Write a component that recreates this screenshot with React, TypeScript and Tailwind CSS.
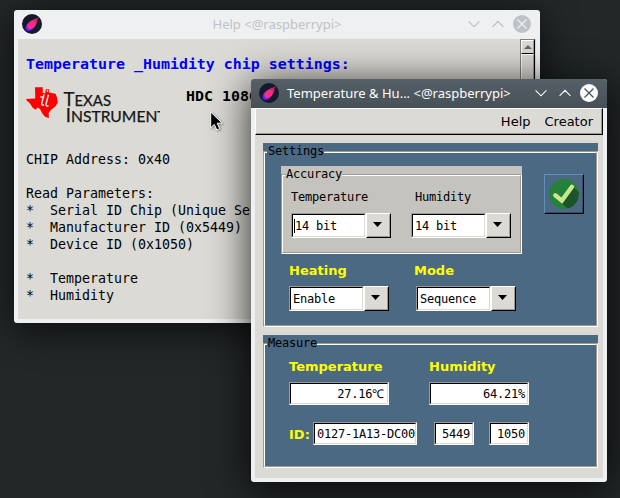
import React from "react";

const mono = "font-['DejaVu_Sans_Mono','Liberation_Mono',monospace]";
const sans = "font-['DejaVu_Sans','Liberation_Sans',sans-serif]";
const noto = "font-['Noto_Sans','Open_Sans',sans-serif]";

function CometIcon({ id }: { id: string }) {
  return (
    <svg width="20" height="20" viewBox="0 0 20 20" className="shrink-0">
      <defs>
        <linearGradient id={id} x1="0.1" y1="0.9" x2="0.8" y2="0.2">
          <stop offset="0" stopColor="#4a20ff" />
          <stop offset="0.35" stopColor="#9a22f0" />
          <stop offset="0.7" stopColor="#f0289c" />
          <stop offset="1" stopColor="#d0205c" />
        </linearGradient>
      </defs>
      <circle cx="10" cy="10" r="10" fill="#151a2a" />
      <path d="M16.8 3.2 15 6.8 15.7 6.7 14.2 10.2C12.7 13.8 9.8 16.6 6.7 16.9 3.6 17 2.8 14.3 4 11.9 5.1 9.5 7.7 7.2 10 6.3L11 6 12.5 4.6 12.8 5.3Z" fill={`url(#${id})`} />
      <ellipse cx="9.3" cy="11.2" rx="4.4" ry="2.8" transform="rotate(-42 9.3 11.2)" fill="#ff2d78" />
    </svg>
  );
}

function TitleButtons({ active }: { active?: boolean }) {
  const line = active ? "#fcfcfc" : "#b9bec2";
  return (
    <svg width="64" height="18" viewBox="0 0 64 18" className="shrink-0">
      <path d="M0.6 6.4 6 11.8 11.4 6.4M24.6 11.8 30 6.4 35.4 11.8" fill="none" stroke={line} strokeWidth="1.1" />
      <circle cx="54" cy="9" r="9" fill={active ? "#fcfcfc" : "#bdc3c7"} />
      <path d="M49.5 4.5 58.5 13.5M58.5 4.5 49.5 13.5" fill="none" stroke={active ? "#475057" : "#eff0f1"} strokeWidth="1.2" />
    </svg>
  );
}

function TexasLogo() {
  return (
    <svg width="134" height="38" viewBox="0 0 134 38" className="block overflow-hidden">
      <path d="M9 1.3H16.7V6.8L19.2 7.4 19.8 3.2H23.4L22.8 6.6 29.6 7.7 31 11.5 31.8 16.5 29.6 20.2 25 24 22.6 27 23 32 19.3 31 16.3 27.6 14 23 11.6 21.6 9.6 23.7 6.7 21.8 4.2 17.7 0.3 14 0.3 13 9.3 12.6Z" fill="#ff0000" />
      <path d="M18 8.2 15.8 17.3Q15.4 19.6 18 18.8M22.4 8.8 20 18.2Q19.6 20.8 22.6 19.8" fill="none" stroke="#ebe2de" strokeWidth="1.5" />
      <path d="M14.3 11H18.2M21.8 3.8 21.3 5.8" fill="none" stroke="#ebe2de" strokeWidth="1.4" />
      <g fill="#161616" stroke="#161616" strokeWidth="0.25" fontFamily="'Lato','Open Sans',sans-serif">
        <text x="37.5" y="20" fontSize="18.5" textLength="11" lengthAdjust="spacingAndGlyphs">T</text>
        <text x="48.5" y="20" fontSize="14.5" textLength="36.5" lengthAdjust="spacingAndGlyphs">EXAS</text>
        <text x="39.7" y="35.5" fontSize="18.5">I</text>
        <text x="45" y="35.5" fontSize="14.5" textLength="104" lengthAdjust="spacingAndGlyphs">NSTRUMENTS</text>
      </g>
    </svg>
  );
}

/** Sunken two-pixel edge around an editable value. */
function Field({ children, className }: { children: React.ReactNode; className: string }) {
  return (
    <div className={`border border-t-[#9e9a91] border-l-[#9e9a91] border-r-white border-b-white ${className}`}>
      <div className={`flex h-full items-center overflow-hidden whitespace-pre border border-t-black border-l-black border-r-[#dcdad5] border-b-[#dcdad5] bg-white text-[12px] leading-[14px] tracking-[-0.224px] text-black ${mono}`}>
        {children}
      </div>
    </div>
  );
}

function Combo({ value, caret }: { value: string; caret?: boolean }) {
  return (
    <div className="flex h-[25px] w-[100px]">
      <Field className="h-[25px] w-[75px]">
        <span className={caret ? "ml-[1px] border-l border-black" : "ml-[2px]"}>{value}</span>
      </Field>
      <div className="h-[25px] w-[25px] border border-t-white border-l-white border-r-black border-b-black">
        <div className="flex h-full items-start justify-start border border-t-[#dcdad5] border-l-[#dcdad5] border-r-[#9e9a91] border-b-[#9e9a91] bg-[#dcdad5] pl-[5px] pt-[7px]">
          <svg width="9" height="5" viewBox="0 0 9 5"><path d="M0 0H9L4.5 5Z" fill="#000" /></svg>
        </div>
      </div>
    </div>
  );
}

/** Grooved group box whose caption interrupts the top edge. */
function Group({ title, bg, className, captionWidth, children }: { title: string; bg: string; className: string; captionWidth: string; children: React.ReactNode }) {
  return (
    <section className={`flex flex-col pt-[8px] ${bg} ${className}`}>
      <div className="flex-1 border border-t-[#9e9a91] border-l-[#9e9a91] border-r-white border-b-white">
        <div className="h-full border border-t-white border-l-white border-r-[#9e9a91] border-b-[#9e9a91]">
          <h2 className={`-mt-[8px] ml-[2px] flex h-[12px] items-center whitespace-nowrap pl-[1px] text-[12px] tracking-[-0.224px] text-black ${mono} ${bg} ${captionWidth}`}>{title}</h2>
          {children}
        </div>
      </div>
    </section>
  );
}

function Caption({ children, className = "" }: { children: React.ReactNode; className?: string }) {
  return <div className={`h-[16px] text-[13px] font-bold leading-[18px] text-[#ffff00] ${sans} ${className}`}>{children}</div>;
}

function HelpWindow() {
  return (
    <div className="absolute left-[14px] top-[10px] flex h-[313px] w-[526px] flex-col rounded-[3px] bg-[#eff0f1] shadow-[0_6px_36px_rgba(0,0,0,0.7)]">
      <header className="flex h-[29px] items-center pb-[1px] pl-[8px] pr-[8px]">
        <CometIcon id="comet-help" />
        <h1 className={`flex-1 pl-[44px] text-center text-[13px] leading-[18px] text-[#bdc3c7] ${noto}`}>Help &lt;@raspberrypi&gt;</h1>
        <TitleButtons />
      </header>
      <main className="mx-[4px] mb-[4px] flex flex-1 bg-[#dbdad5]">
        <div className={`flex-1 whitespace-pre pl-[8px] text-[13.29px] leading-[17px] text-black ${mono}`}>
          <h2 className="pt-[16px] text-[14.95px] font-bold leading-[18px] text-[#0000ff]">Temperature _Humidity chip settings:</h2>
          <div className="mt-[13px] flex">
            <TexasLogo />
            <strong className="ml-[26px] text-[14.95px] leading-[20px]">HDC 1080</strong>
          </div>
          <p className="mt-[27px]">CHIP Address: 0x40</p>
          <p className="mt-[17px]">Read Parameters:</p>
          <p>*  Serial ID Chip (Unique Serial)</p>
          <p>*  Manufacturer ID (0x5449)</p>
          <p>*  Device ID (0x1050)</p>
          <p className="mt-[17px]">*  Temperature</p>
          <p>*  Humidity</p>
        </div>
        <div className="mr-[1px] flex w-[15px] flex-col border border-t-[#807e78] border-l-[#807e78] border-r-black border-b-black bg-[#dbdad5]">
          <div className="flex h-[14px] items-center justify-center border border-t-white border-l-white border-r-[#9e9a91] border-b-black">
            <svg width="8" height="4" viewBox="0 0 8 4"><path d="M4 0 8 4H0Z" fill="#666" /></svg>
          </div>
          <div className="flex-1 border border-t-white border-l-white border-r-[#9e9a91] border-b-black" />
        </div>
      </main>
    </div>
  );
}

function ChipWindow() {
  return (
    <div className="absolute left-[251px] top-[79px] flex h-[403px] w-[356px] flex-col rounded-[3px] bg-[#eff0f1] shadow-[0_6px_42px_rgba(0,0,0,0.85)]">
      <header className="flex h-[29px] items-center rounded-t-[3px] bg-linear-to-b from-[#566068] to-[#475057] pb-[1px] pl-[8px] pr-[8px]">
        <CometIcon id="comet-chip" />
        <h1 className={`flex-1 whitespace-nowrap pl-[8px] text-[13px] leading-[18px] text-[#fcfcfc] ${noto}`}>Temperature &amp; Hu... &lt;@raspberrypi&gt;</h1>
        <TitleButtons active />
      </header>
      <main className="mx-[4px] mb-[4px] flex-1 bg-[#dbdad5]">
        <nav className="h-[27px] border border-t-white border-l-white border-r-black border-b-black">
          <div className={`flex h-full items-center justify-end gap-[14px] border-r border-b border-[#9e9a91] pr-[8px] pt-[2px] text-[13px] text-black ${sans}`}>
            <span>Help</span>
            <span>Creator</span>
          </div>
        </nav>
        <div className="pl-[8px] pt-[8px]">
          <Group title="Settings" bg="bg-[#4b6983]" captionWidth="w-[57px]" className="h-[184px] w-[335px]">
            <div className="ml-[16px] mt-[9px] flex">
              <Group title="Accuracy" bg="bg-[#c5c3be]" captionWidth="w-[57px]" className="h-[88px] w-[241px]">
                <div className={`mt-[9px] flex pl-[8px] text-[12px] leading-[16px] tracking-[-0.224px] text-black ${mono}`}>
                  <span className="w-[124px]">Temperature</span>
                  <span>Humidity</span>
                </div>
                <div className="mt-[8px] flex gap-[20px] pl-[8px]">
                  <Combo value="14 bit" caret />
                  <Combo value="14 bit" />
                </div>
              </Group>
              <button className="ml-[22px] mt-[8px] h-[40px] w-[40px] border border-t-[#5f8fbd] border-l-[#5f8fbd] border-r-black border-b-black">
                <span className="flex h-full items-center justify-center border-r border-b border-[#364e63]">
                  <svg width="30" height="30" viewBox="0 0 30 30">
                    <circle cx="15" cy="15" r="15" fill="#25803b" />
                    <path d="M24.5 8 29.7 13.2A15 15 0 0 1 18.5 29.6L12 23.5Z" fill="#1e5229" />
                    <path d="M6.3 16.3 12.9 21.6 23 7.8" fill="none" stroke="#c9e88b" strokeWidth="4.4" strokeLinejoin="miter" strokeLinecap="round" />
                  </svg>
                </span>
              </button>
            </div>
            <div className="ml-[24px] mt-[8px] flex">
              <div className="w-[125px]">
                <Caption className="mb-[8px]">Heating</Caption>
                <Combo value="Enable" />
              </div>
              <div>
                <Caption className="mb-[8px]">Mode</Caption>
                <div className="pl-[2px]"><Combo value="Sequence" /></div>
              </div>
            </div>
          </Group>
          <Group title="Measure" bg="bg-[#4b6983]" captionWidth="w-[50px]" className="mt-[8px] h-[133px] w-[335px]">
            <div className="ml-[24px] mt-[9px] flex gap-[40px]">
              <div className="w-[100px]">
                <Caption className="mb-[8px]">Temperature</Caption>
                <Field className="h-[23px]"><span className="ml-auto pr-[3px]">27.16℃</span></Field>
              </div>
              <div className="w-[100px]">
                <Caption className="mb-[8px]">Humidity</Caption>
                <Field className="h-[23px]"><span className="ml-auto pr-[2px]">64.21%</span></Field>
              </div>
            </div>
            <div className="ml-[24px] mt-[17px] flex items-center">
              <Caption className="w-[24px]">ID:</Caption>
              <Field className="h-[23px] w-[104px]"><span className="ml-[2px]">0127-1A13-DC00</span></Field>
              <Field className="ml-[17px] h-[23px] w-[40px]"><span className="ml-auto pr-[2px]">5449</span></Field>
              <Field className="ml-[15px] h-[23px] w-[40px]"><span className="ml-auto pr-[2px]">1050</span></Field>
            </div>
          </Group>
        </div>
      </main>
    </div>
  );
}

export default function App() {
  return (
    <div className="relative h-[498px] w-[620px] overflow-hidden bg-[#232728]">
      <HelpWindow />
      <ChipWindow />
      <svg width="14" height="21" viewBox="0 0 14 21" className="absolute left-[210px] top-[111px] overflow-visible drop-shadow-[1px_1px_1px_rgba(0,0,0,0.4)]">
        <path d="M0.7 1V16.8L4.3 13.4 6.8 19 9.7 17.7 7.2 12.2H12.2Z" fill="#000" stroke="#fff" strokeWidth="1" />
      </svg>
    </div>
  );
}
